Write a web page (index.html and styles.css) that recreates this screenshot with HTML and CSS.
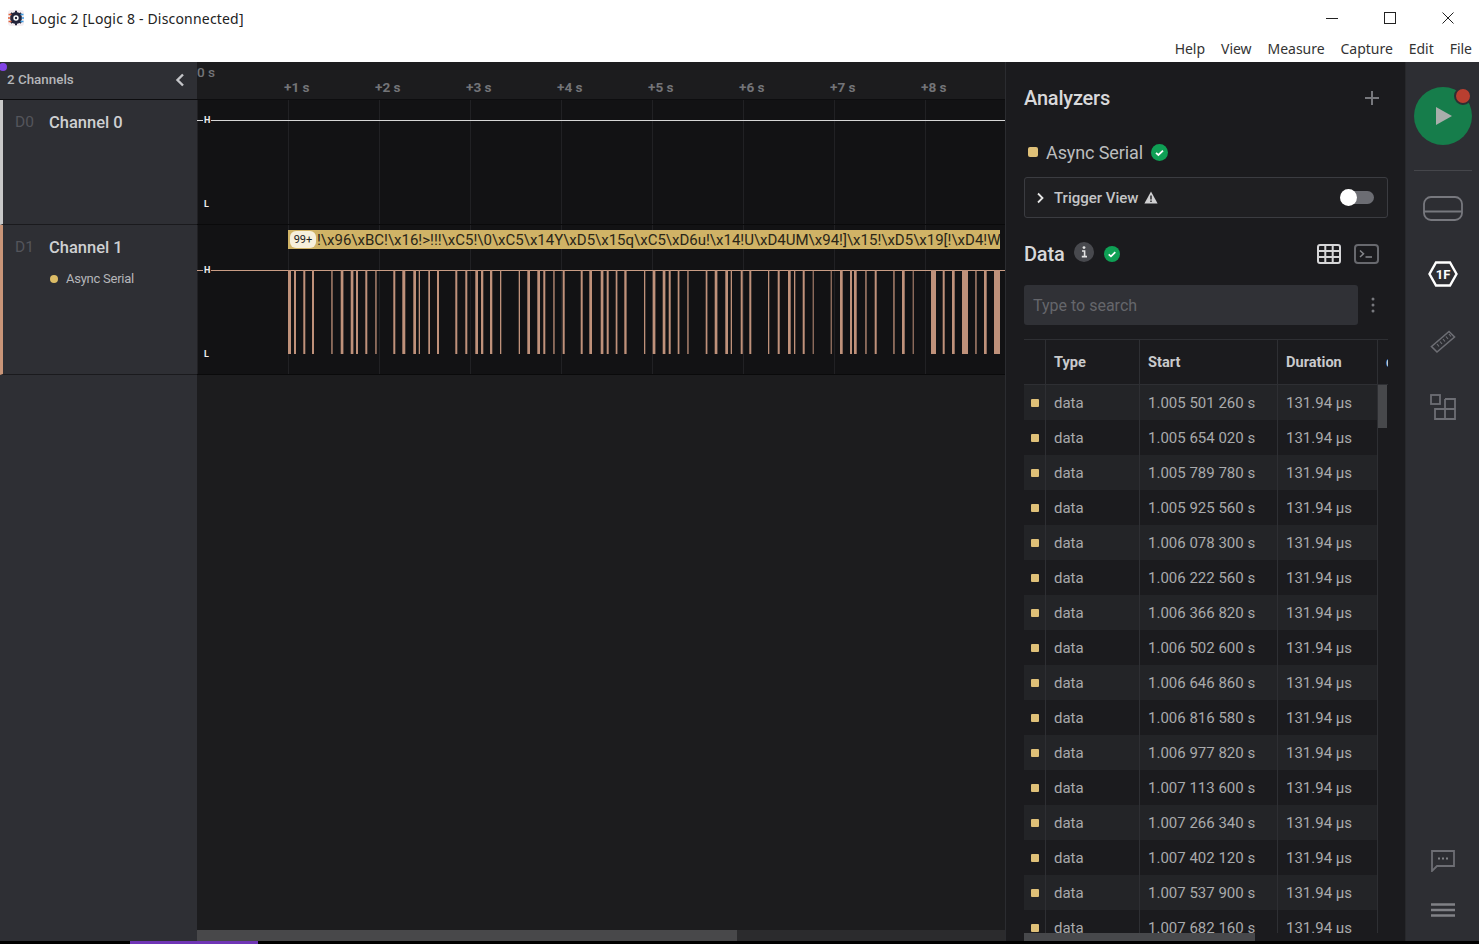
FILE: index.html
```html
<!DOCTYPE html>
<html lang="en">
<head>
<meta charset="utf-8">
<title>Logic 2</title>
<link rel="stylesheet" href="styles.css">
</head>
<body>
<header class="titlebar">
  <div class="title-row">
    <svg class="logo" width="16" height="16" viewBox="0 0 16 16">
      <rect x="0" y="0" width="16" height="16" rx="3" fill="#f4eef2"/>
      <circle cx="8" cy="8" r="6" fill="#23243a"/>
      <path d="M8 0.8v2M8 13.2v2M3 3l1.5 1.5M13 3l-1.5 1.5M3 13l1.5-1.5M13 13l-1.5-1.5" stroke="#23243a" stroke-width="2"/>
      <path d="M0.5 4.5h3M0 8h2.4M0.5 11.5h3" stroke="#e0623a" stroke-width="1.5"/>
      <path d="M12.5 4.5h3M13.6 8h2.4M12.5 11.5h3" stroke="#3f9be0" stroke-width="1.5"/>
      <circle cx="8" cy="8" r="2.7" fill="#fff"/>
      <circle cx="8" cy="8" r="1.2" fill="#23243a"/>
    </svg>
    <span class="app-title">Logic 2 [Logic 8 - Disconnected]</span>
    <div class="win-controls">
      <svg width="12" height="12" viewBox="0 0 12 12"><path d="M0 6.5h12" stroke="#222" stroke-width="1"/></svg>
      <svg width="12" height="12" viewBox="0 0 12 12"><rect x=".5" y=".5" width="11" height="11" fill="none" stroke="#222"/></svg>
      <svg width="12" height="12" viewBox="0 0 12 12"><path d="M.5.5l11 11M11.5.5l-11 11" stroke="#222" stroke-width="1"/></svg>
    </div>
  </div>
  <nav class="menu-row">
    <span>Help</span><span>View</span><span>Measure</span><span>Capture</span><span>Edit</span><span>File</span>
  </nav>
</header>

<main class="app">
  <span class="purple-dot"></span>
  <aside class="sidebar">
    <div class="side-head">
      <span class="side-count">2 Channels</span>
      <svg width="10" height="14" viewBox="0 0 10 14"><path d="M8 1.5L2.5 7 8 12.5" fill="none" stroke="#c4c5c8" stroke-width="2.4"/></svg>
    </div>
    <div class="chan chan-0">
      <div class="chan-line"><span class="chan-id">D0</span><span class="chan-name">Channel 0</span></div>
    </div>
    <div class="chan chan-1">
      <div class="chan-line"><span class="chan-id">D1</span><span class="chan-name">Channel 1</span></div>
      <div class="chan-sub"><span class="dot"></span><span>Async Serial</span></div>
    </div>
  </aside>

  <section class="center">
    <div class="ruler">
      <div class="ruler-zero">0 s</div>
      <div class="ruler-ticks">
        <span>+1 s</span><span>+2 s</span><span>+3 s</span><span>+4 s</span><span>+5 s</span><span>+6 s</span><span>+7 s</span><span>+8 s</span>
      </div>
    </div>
    <div class="wave wave-0">
      <span class="lvl lvl-h">H</span>
      <span class="lvl lvl-l">L</span>
    </div>
    <div class="wave wave-1">
      <div class="bubble"><span class="badge">99+</span><span class="bubble-text">!\x96\xBC!\x16!&gt;!!!\xC5!\0\xC5\x14Y\xD5\x15q\xC5\xD6u!\x14!U\xD4UM\x94!]\x15!\xD5\x19[!\xD4!W</span></div>
      <span class="lvl lvl-h">H</span>
      <span class="lvl lvl-l">L</span>
      <svg class="pulses" width="808" height="84" viewBox="0 0 808 84" fill="#bf917a">
        <rect x="91" width="3" height="84"/><rect x="97" width="2" height="84"/><rect x="106.3" width="2" height="84"/><rect x="115" width="2" height="84"/><rect x="134.3" width="1.3" height="84"/><rect x="143.7" width="2.7" height="84"/><rect x="153.7" width="2.7" height="84"/><rect x="159" width="2" height="84"/><rect x="168.3" width="2" height="84"/><rect x="178.3" width="1.3" height="84"/>
        <rect x="196.3" width="2" height="84"/><rect x="205.3" width="3" height="84"/><rect x="216.3" width="2.7" height="84"/><rect x="221.7" width="1.3" height="84"/><rect x="231.3" width="1.7" height="84"/><rect x="240" width="2" height="84"/><rect x="258.3" width="2" height="84"/><rect x="268.3" width="2" height="84"/><rect x="278.3" width="2.7" height="84"/><rect x="284" width="2.3" height="84"/>
        <rect x="293" width="2.3" height="84"/><rect x="303" width="1.3" height="84"/><rect x="321.7" width="1.3" height="84"/><rect x="330.3" width="2.7" height="84"/><rect x="340.3" width="2.7" height="84"/><rect x="346.3" width="2" height="84"/><rect x="356.3" width="1.3" height="84"/><rect x="365.7" width="2" height="84"/><rect x="383.7" width="2" height="84"/><rect x="392.3" width="2.7" height="84"/>
        <rect x="403.7" width="2.7" height="84"/><rect x="409.7" width="2" height="84"/><rect x="418.7" width="1.7" height="84"/><rect x="427.3" width="2.3" height="84"/><rect x="447" width="1.3" height="84"/><rect x="455.7" width="2.7" height="84"/><rect x="465.7" width="2.7" height="84"/><rect x="471.7" width="2" height="84"/><rect x="480.7" width="1.7" height="84"/><rect x="490.3" width="1.3" height="84"/>
        <rect x="508.7" width="1.7" height="84"/><rect x="517.7" width="2.7" height="84"/><rect x="528.3" width="2.7" height="84"/><rect x="533.7" width="1.3" height="84"/><rect x="543.7" width="2" height="84"/><rect x="552.3" width="2" height="84"/><rect x="571" width="1.3" height="84"/><rect x="580.7" width="2" height="84"/><rect x="591" width="2.7" height="84"/><rect x="597" width="1.3" height="84"/>
        <rect x="605.7" width="2" height="84"/><rect x="615.7" width="1" height="84"/><rect x="633.7" width="1" height="84"/><rect x="643" width="2.7" height="84"/><rect x="653" width="2" height="84"/><rect x="657" width="2.7" height="84"/><rect x="668.3" width="1.3" height="84"/><rect x="677.7" width="2" height="84"/><rect x="696.3" width="1.3" height="84"/><rect x="705" width="2.7" height="84"/>
        <rect x="715.7" width="1" height="84"/><rect x="734" width="5" height="84"/><rect x="745.7" width="2" height="84"/><rect x="755" width="2.7" height="84"/><rect x="765" width="6" height="84"/><rect x="778.3" width="1.3" height="84"/><rect x="787" width="2.7" height="84"/><rect x="797" width="6" height="84"/>
      </svg>
    </div>
    <div class="center-fill"></div>
    <div class="hscroll"><div class="hscroll-thumb"></div></div>
  </section>

  <section class="panel">
    <div class="panel-head">
      <h2 class="panel-title">Analyzers</h2>
      <svg width="14" height="14" viewBox="0 0 14 14"><path d="M7 0v14M0 7h14" stroke="#77787d" stroke-width="2"/></svg>
    </div>
    <div class="analyzer">
      <span class="sq"></span>
      <span class="analyzer-name">Async Serial</span>
      <svg width="17" height="17" viewBox="0 0 17 17"><circle cx="8.5" cy="8.5" r="8.5" fill="#0fa055"/><path d="M5 8.8l2.4 2.2L12 6.6" fill="none" stroke="#fff" stroke-width="1.8"/></svg>
    </div>
    <div class="trigger">
      <svg width="8" height="12" viewBox="0 0 8 12"><path d="M2 1.5L6.5 6 2 10.5" fill="none" stroke="#e6e6e6" stroke-width="1.8"/></svg>
      <span class="trigger-text">Trigger View</span>
      <svg class="warn" width="14" height="13" viewBox="0 0 14 13"><path d="M7 0.5L13.6 12.5H.4z" fill="#d0d0d2"/><path d="M7 4.5v4M7 9.5v1.6" stroke="#1c1c1f" stroke-width="1.4"/></svg>
      <span class="toggle"><span class="knob"></span></span>
    </div>
    <div class="data-head">
      <h2 class="panel-title">Data</h2>
      <svg class="info" width="20" height="20" viewBox="0 0 20 20"><circle cx="10" cy="10" r="10" fill="#48494e"/><circle cx="10" cy="5.6" r="1.4" fill="#e4e4e4"/><path d="M8 9h2.6v5M7.8 14.6h5.2" fill="none" stroke="#e4e4e4" stroke-width="1.6"/></svg>
      <svg class="data-check" width="16" height="16" viewBox="0 0 17 17"><circle cx="8.5" cy="8.5" r="8.5" fill="#0fa055"/><path d="M5 8.8l2.4 2.2L12 6.6" fill="none" stroke="#fff" stroke-width="1.8"/></svg>
      <svg class="tbl-icon" width="24" height="20" viewBox="0 0 24 20"><rect x="1" y="1" width="22" height="18" rx="2" fill="none" stroke="#d6d6d8" stroke-width="2"/><path d="M1 7h22M1 13h22M8.3 1v18M15.7 1v18" stroke="#d6d6d8" stroke-width="2"/></svg>
      <svg class="term-icon" width="25" height="20" viewBox="0 0 25 20"><rect x="1" y="1" width="23" height="18" rx="3" fill="none" stroke="#68696e" stroke-width="2"/><path d="M6 6.5l3.5 3.3L6 13M11.5 13H18" fill="none" stroke="#85868a" stroke-width="1.5"/></svg>
    </div>
    <div class="search-row">
      <div class="search">Type to search</div>
      <svg width="4" height="16" viewBox="0 0 4 16"><circle cx="2" cy="2" r="1.5" fill="#77787d"/><circle cx="2" cy="8" r="1.5" fill="#77787d"/><circle cx="2" cy="14" r="1.5" fill="#77787d"/></svg>
    </div>
    <div class="table">
      <div class="rows">
        <div class="row head">
          <span class="c0"></span><span class="c1">Type</span><span class="c2">Start</span><span class="c3">Duration</span><span class="c4">data</span>
        </div>
        <div class="row"><span class="c0"><i></i></span><span class="c1">data</span><span class="c2">1.005 501 260 s</span><span class="c3">131.94 µs</span></div>
        <div class="row"><span class="c0"><i></i></span><span class="c1">data</span><span class="c2">1.005 654 020 s</span><span class="c3">131.94 µs</span></div>
        <div class="row"><span class="c0"><i></i></span><span class="c1">data</span><span class="c2">1.005 789 780 s</span><span class="c3">131.94 µs</span></div>
        <div class="row"><span class="c0"><i></i></span><span class="c1">data</span><span class="c2">1.005 925 560 s</span><span class="c3">131.94 µs</span></div>
        <div class="row"><span class="c0"><i></i></span><span class="c1">data</span><span class="c2">1.006 078 300 s</span><span class="c3">131.94 µs</span></div>
        <div class="row"><span class="c0"><i></i></span><span class="c1">data</span><span class="c2">1.006 222 560 s</span><span class="c3">131.94 µs</span></div>
        <div class="row"><span class="c0"><i></i></span><span class="c1">data</span><span class="c2">1.006 366 820 s</span><span class="c3">131.94 µs</span></div>
        <div class="row"><span class="c0"><i></i></span><span class="c1">data</span><span class="c2">1.006 502 600 s</span><span class="c3">131.94 µs</span></div>
        <div class="row"><span class="c0"><i></i></span><span class="c1">data</span><span class="c2">1.006 646 860 s</span><span class="c3">131.94 µs</span></div>
        <div class="row"><span class="c0"><i></i></span><span class="c1">data</span><span class="c2">1.006 816 580 s</span><span class="c3">131.94 µs</span></div>
        <div class="row"><span class="c0"><i></i></span><span class="c1">data</span><span class="c2">1.006 977 820 s</span><span class="c3">131.94 µs</span></div>
        <div class="row"><span class="c0"><i></i></span><span class="c1">data</span><span class="c2">1.007 113 600 s</span><span class="c3">131.94 µs</span></div>
        <div class="row"><span class="c0"><i></i></span><span class="c1">data</span><span class="c2">1.007 266 340 s</span><span class="c3">131.94 µs</span></div>
        <div class="row"><span class="c0"><i></i></span><span class="c1">data</span><span class="c2">1.007 402 120 s</span><span class="c3">131.94 µs</span></div>
        <div class="row"><span class="c0"><i></i></span><span class="c1">data</span><span class="c2">1.007 537 900 s</span><span class="c3">131.94 µs</span></div>
        <div class="row"><span class="c0"><i></i></span><span class="c1">data</span><span class="c2">1.007 682 160 s</span><span class="c3">131.94 µs</span></div>
      </div>
      <div class="table-hbar"><div class="hthumb"></div></div>
      <div class="vthumb"></div>
    </div>
  </section>

  <nav class="rail">
    <div class="play">
      <svg width="18" height="20" viewBox="0 0 18 20"><path d="M1 1l16 9-16 9z" fill="#a9aeab"/></svg>
      <span class="rec"></span>
    </div>
    <div class="rail-line"></div>
    <svg class="ic-device" width="40" height="25" viewBox="0 0 40 25"><rect x="1" y="1" width="38" height="23" rx="7" fill="none" stroke="#77787e" stroke-width="1.8"/><path d="M1 15.5h38" stroke="#77787e" stroke-width="1.8"/></svg>
    <svg class="ic-hex" width="30" height="26" viewBox="0 0 30 26"><path d="M8 1.5h14L28.5 13 22 24.5H8L1.5 13z" fill="none" stroke="#fff" stroke-width="2.4"/><text x="15" y="18" class="hex-text" text-anchor="middle">1F</text></svg>
    <svg class="ic-ruler" width="26" height="26" viewBox="0 0 26 26"><path d="M1.5 18.5L19 3.5l5.5 5.5L7 24z" fill="none" stroke="#6d6e74" stroke-width="1.6"/><path d="M7 16l2 2.5M10 13.5l2 2.5M13 11l2 2.5M16 8.5l2 2.5M19 6l2 2.5" stroke="#6d6e74" stroke-width="1.2"/></svg>
    <svg class="ic-ext" width="26" height="26" viewBox="0 0 26 26"><rect x="1" y="1" width="9" height="9" fill="none" stroke="#6d6e74" stroke-width="1.8"/><path d="M15 5h10v20H5V15h20M15 5v20" fill="none" stroke="#6d6e74" stroke-width="1.8"/></svg>
    <div class="rail-space"></div>
    <svg class="ic-chat" width="24" height="22" viewBox="0 0 24 22"><path d="M1 1h22v15H6l-5 5z" fill="none" stroke="#6d6e74" stroke-width="1.8"/><path d="M7 8.5h2M11 8.5h2M15 8.5h2" stroke="#808186" stroke-width="1.9"/></svg>
    <svg class="ic-menu" width="24" height="14" viewBox="0 0 24 14"><path d="M0 1.5h24M0 7h24M0 12.5h24" stroke="#808186" stroke-width="2.6"/></svg>
  </nav>
</main>

<footer class="statusbar"><span class="status-purple"></span></footer>
</body>
</html>
```

FILE: styles.css
```css
* { box-sizing: border-box; }
html, body { margin: 0; padding: 0; }
body {
  width: 1479px;
  height: 944px;
  overflow: hidden;
  display: flex;
  flex-direction: column;
  background: #000;
  font-family: Roboto, "Liberation Sans", sans-serif;
}

/* window chrome */
.titlebar { height: 62px; background: #fff; color: #222; font-family: "Noto Sans", "Open Sans", sans-serif; flex: none; }
.title-row { height: 36px; display: flex; align-items: center; padding-left: 8px; }
.logo { flex: none; margin-top: -1px; }
.app-title { margin-left: 7px; font-size: 14px; letter-spacing: 0.19px; }
.win-controls { margin-left: auto; display: flex; gap: 46px; padding-right: 25px; }
.menu-row { height: 26px; display: flex; justify-content: flex-end; align-items: center; gap: 16px; padding: 0 7px 2px 0; font-size: 14px; letter-spacing: -0.03px; color: #333; }

.app { position: relative; flex: 1; min-height: 0; display: flex; }
.purple-dot { position: absolute; left: -1px; top: 1px; width: 8px; height: 8px; border-radius: 50%; background: #8244e6; }

/* sidebar */
.sidebar { width: 197px; flex: none; background: #2e2f34; display: flex; flex-direction: column; }
.side-head { height: 38px; flex: none; display: flex; align-items: center; justify-content: space-between; padding: 0 12px 2px 7px; border-bottom: 1px solid #0d0d0f; }
.side-count { font-size: 13.4px; font-weight: 500; color: #b5b6b9; }
.chan { padding: 11px 0 0 12px; border-left: 3px solid; border-bottom: 1px solid #1a1a1d; flex: none; }
.chan-0 { height: 125px; border-left-color: #c9c9c9; }
.chan-1 { height: 150px; border-left-color: #c99578; }
.chan-line { display: flex; align-items: center; height: 22px; }
.chan-id { width: 34px; font-size: 15.5px; color: #54555b; }
.chan-name { font-size: 16.5px; font-weight: 500; color: #cfd0d2; }
.chan-sub { display: flex; align-items: center; margin: 13px 0 0 35px; font-size: 13px; color: #b5b6b9; letter-spacing: -0.25px; }
.dot { width: 8px; height: 8px; border-radius: 50%; background: #dcbc66; margin-right: 8px; }

/* waveforms */
.center { width: 808px; flex: none; display: flex; flex-direction: column; background: #1c1c1e; }
.ruler { height: 38px; flex: none; border-bottom: 1px solid #0d0d0f; color: #737478; font-size: 13.6px; font-weight: 700; }
.ruler-zero { height: 16px; line-height: 20px; font-weight: 500; }
.ruler-ticks { display: flex; padding-left: 87px; line-height: 18px; }
.ruler-ticks span { width: 91px; flex: none; }
.wave { position: relative; flex: none; background-color: #121214; background-image: linear-gradient(to right, #212124 1px, transparent 1px); background-size: 91px 100%; border-bottom: 1px solid #0a0a0b; }
.wave-0 { height: 125px; }
.wave-1 { height: 150px; }
.wave::before { content: ""; position: absolute; left: 0; right: 0; height: 1px; }
.wave-0::before { top: 20px; background: #d6d6d6; }
.wave-1::before { top: 45px; background: #c99d85; }
.lvl { position: absolute; left: 6px; font-size: 9px; line-height: 10px; font-weight: 700; color: #eee; background: #121214; padding: 0 1px; }
.lvl-h { top: 15px; }
.wave-1 .lvl-h { top: 40px; }
.lvl-l { top: 99px; background: none; }
.wave-1 .lvl-l { top: 124px; }
.pulses { position: absolute; left: 0; top: 45px; display: block; }
.bubble { position: absolute; left: 91px; top: 5px; width: 712px; height: 19px; background: #d0b366; display: flex; align-items: center; padding-left: 2px; overflow: hidden; white-space: nowrap; }
.badge { width: 26px; height: 17px; flex: none; background: #f7f0dc; border-radius: 6px; font-size: 11px; line-height: 17px; text-align: center; color: #222; }
.bubble-text { margin-left: 1px; font-size: 15px; color: #2a2618; }
.center-fill { flex: 1; }
.hscroll { height: 11px; flex: none; background: #2b2b2d; }
.hscroll-thumb { width: 540px; height: 100%; background: #48484a; }

/* right panel */
.panel { width: 400px; flex: none; background: #1b1b1e; border-left: 1px solid #2b2c30; padding: 22px 17px 0 18px; display: flex; flex-direction: column; }
.panel-head { height: 28px; display: flex; align-items: center; justify-content: space-between; padding-right: 9px; flex: none; }
.panel-title { margin: 0; font-size: 20px; font-weight: 500; color: #d8d8da; letter-spacing: -0.2px; line-height: 28px; }
.analyzer { height: 28px; margin-top: 26px; display: flex; align-items: center; padding-left: 4px; flex: none; }
.sq { width: 10px; height: 10px; border-radius: 2px; background: #dfc078; flex: none; }
.analyzer-name { margin: 0 8px 0 8px; font-size: 18px; color: #bcbdbf; letter-spacing: -0.1px; }
.trigger { height: 41px; margin-top: 11px; flex: none; display: flex; align-items: center; border: 1px solid #3b3c41; border-radius: 3px; background: #1f1f22; padding: 0 13px 0 11px; }
.trigger-text { margin-left: 10px; font-size: 15px; font-weight: 500; color: #c4c5c7; }
.warn { margin-left: 5px; }
.toggle { margin-left: auto; position: relative; width: 29px; height: 13px; border-radius: 7px; background: #6c6d73; }
.knob { position: absolute; left: -5px; top: -2px; width: 17px; height: 17px; border-radius: 50%; background: #fff; }
.data-head { height: 28px; margin-top: 22px; flex: none; display: flex; align-items: center; }
.info { margin: -4px 0 0 10px; }
.data-check { margin-left: 10px; }
.tbl-icon { margin-left: auto; }
.term-icon { margin: 0 9px 0 13px; }
.search-row { margin-top: 17px; flex: none; display: flex; align-items: center; }
.search { width: 334px; height: 40px; line-height: 41px; padding-left: 9px; background: #303136; border-radius: 3px; font-size: 16px; color: #65666b; }
.search-row svg { margin-left: 13px; }
.table { position: relative; margin-top: 14px; flex: 1; min-height: 0; display: flex; flex-direction: column; border-top: 1px solid #2e2f33; }
.rows { flex: 1; min-height: 0; overflow: hidden; }
.table-hbar { height: 8px; flex: none; }
.row { display: flex; width: 354px; height: 35px; font-size: 15px; color: #a9aaac; }
.row:nth-child(even) { background: #232427; }
.row span { display: flex; align-items: center; padding-left: 8px; border-right: 1px solid #2e2f33; overflow: hidden; white-space: nowrap; flex: none; }
.row .c0 { width: 22px; padding-left: 7px; }
.row .c1 { width: 94px; }
.row .c2 { width: 138px; }
.row .c3 { width: 100px; }
.row .c4 { width: 10px; border: 0; }
.row i { display: block; width: 8px; height: 8px; background: #dfc078; border-radius: 1px; }
.row.head { width: 364px; height: 45px; font-size: 14.6px; font-weight: 700; color: #c9cacc; background: #1b1b1e; border-bottom: 1px solid #2e2f33; }
.vthumb { position: absolute; left: 354px; top: 45px; width: 9px; height: 43px; background: #47484b; }
.hthumb { width: 231px; height: 8px; background: #47484b; }

/* right rail */
.rail { width: 74px; flex: none; background: #2d2e33; border-left: 1px solid #27282b; display: flex; flex-direction: column; align-items: center; padding-top: 25px; }
.play { position: relative; width: 58px; height: 58px; border-radius: 50%; background: #167d4b; display: flex; align-items: center; justify-content: center; padding-left: 3px; flex: none; }
.rec { position: absolute; left: 40px; top: 0; width: 18px; height: 18px; border-radius: 50%; background: #b93f30; border: 2.5px solid #2d2e33; }
.rail-line { width: 58px; height: 1px; background: #45464b; margin-top: 25px; flex: none; }
.ic-device { margin-top: 25px; flex: none; }
.ic-hex { margin-top: 40px; flex: none; }
.hex-text { font-family: Roboto, sans-serif; font-size: 13px; font-weight: 700; fill: #fff; }
.ic-ruler { margin-top: 41px; flex: none; }
.ic-ext { margin-top: 40px; flex: none; }
.rail-space { flex: 1; }
.ic-chat { flex: none; }
.ic-menu { margin: 31px 0 24px; flex: none; }

.statusbar { height: 3px; flex: none; background: #000; padding-left: 130px; }
.status-purple { display: block; width: 128px; height: 3px; background: #6f35b5; }
```
